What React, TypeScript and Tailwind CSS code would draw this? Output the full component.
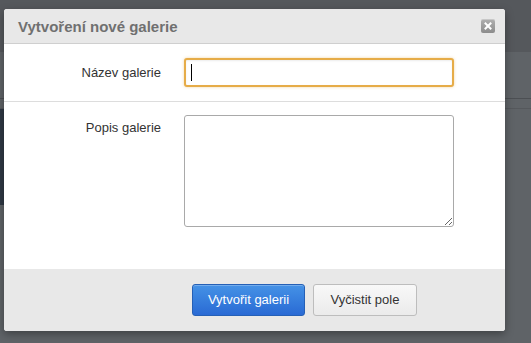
import React from 'react';

const FONT = { fontFamily: '"Liberation Sans", Arial, sans-serif' };

function CloseButton() {
  return (
    <button
      type="button"
      aria-label="Zavřít"
      className="flex items-center justify-center w-[14px] h-[14px] rounded-[2px] bg-gradient-to-b from-[#b0b0b0] to-[#8c8c8c] shadow-[inset_0_1px_0_rgba(255,255,255,0.3)]"
    >
      <svg width="8" height="8" viewBox="0 0 8 8" fill="none" stroke="#fff" strokeWidth="2" strokeLinecap="square">
        <path d="M1.5 1.5l5 5M6.5 1.5l-5 5" />
      </svg>
    </button>
  );
}

function Backdrop() {
  return (
    <div className="absolute inset-0 flex flex-col bg-[#5f6367]">
      <div className="h-[52px] bg-[#55585c] shrink-0" />
      <div className="h-[47px] bg-[#5f6367] border-b border-[#4c4f53] shrink-0" />
      <div className="h-[10px] border-b border-[#55585c] shrink-0" />
      <div className="flex">
        <div className="w-[120px] h-[96px] bg-[#2f3844]" />
      </div>
    </div>
  );
}

export default function App() {
  return (
    <div className="relative w-[531px] h-[343px] overflow-hidden" style={FONT}>
      <Backdrop />

      <div className="absolute left-[4px] top-[9px] w-[501px] flex flex-col rounded-[3px] overflow-hidden bg-white shadow-[0_3px_8px_rgba(0,0,0,0.35)]">
        <div className="h-[35px] flex items-center justify-between pl-[14px] pr-[10px] bg-[#e8e8e8] border-b border-[#cfcfcf]">
          <h3 className="text-[15px] font-bold text-[#707070] leading-none">Vytvoření nové galerie</h3>
          <CloseButton />
        </div>

        <div className="flex items-center pt-[14px] pb-[14px] border-b border-[#dddddd]">
          <label className="w-[157px] text-right text-[13px] text-[#333] pr-0">Název galerie</label>
          <div className="relative ml-[23px]">
            <input
              type="text"
              className="block w-[270px] h-[29px] rounded-[3px] border-2 border-[#e6ac48] bg-white px-[6px] text-[13px] outline-none caret-transparent shadow-[0_0_3px_rgba(230,172,72,0.5),inset_0_1px_2px_rgba(0,0,0,0.08)]"
            />
            <span className="absolute left-[7px] top-[6px] w-px h-[17px] bg-black" />
          </div>
        </div>

        <div className="flex items-start pt-[13px] pb-[42px]">
          <label className="w-[157px] text-right text-[13px] text-[#333] mt-[3px]">Popis galerie</label>
          <textarea className="block ml-[23px] w-[270px] h-[112px] rounded-[3px] border border-[#a9a9a9] bg-white px-[6px] py-[4px] text-[13px] outline-none" />
        </div>

        <div className="h-[62px] flex items-center gap-[8px] pl-[188px] bg-[#e8e8e8]">
          <button
            type="button"
            className="w-[113px] h-[32px] rounded-[3px] border border-[#2560b6] bg-gradient-to-b from-[#4592e6] to-[#2a6ad4] text-white text-[13px] shadow-[inset_0_1px_0_rgba(255,255,255,0.25)]"
          >
            Vytvořit galerii
          </button>
          <button
            type="button"
            className="w-[104px] h-[32px] rounded-[3px] border border-[#bdbdbd] bg-gradient-to-b from-[#f8f8f8] to-[#ebebeb] text-[#333] text-[13px]"
          >
            Vyčistit pole
          </button>
        </div>
      </div>
    </div>
  );
}
